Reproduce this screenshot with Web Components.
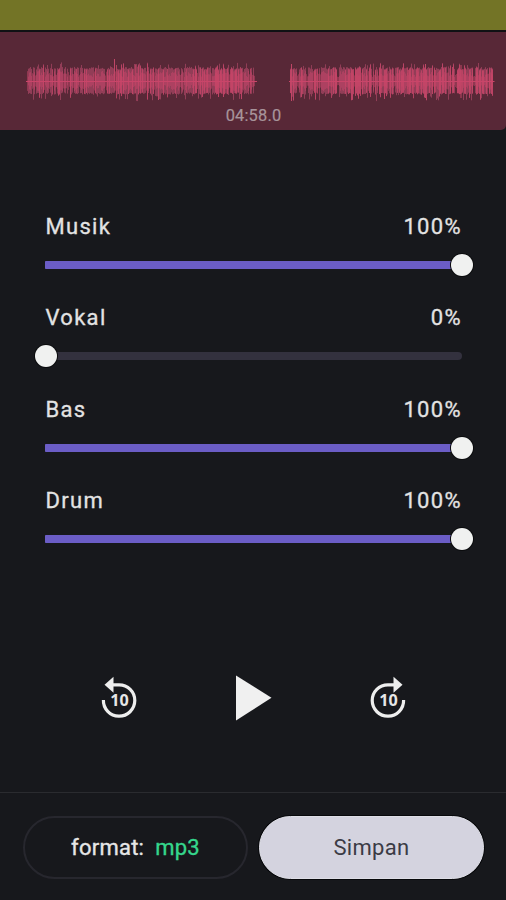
<!DOCTYPE html>
<html lang="id">
<head>
<meta charset="utf-8">
<title>Mixer</title>
<style>
html,body{margin:0;height:100%;background:#17181c}
body{font-family:Roboto,"Liberation Sans",sans-serif;color:#e3e3e3;overflow:hidden}
</style>
</head>
<body>
<mixer-app></mixer-app>
<script>
class BaseElement extends HTMLElement {
  render(html) {
    if (!this.shadowRoot) this.attachShadow({ mode: 'open' });
    this.shadowRoot.innerHTML = html;
  }
}

class WaveTrack extends BaseElement {
  connectedCallback() {
    let seed = 41;
    const rnd = () => (seed = (seed * 16807) % 2147483647) / 2147483647;
    let soft = '', strong = '', core = '';
    const segment = (from, to, density) => {
      for (let x = from; x < to; x += 1) {
        const d = density(x);
        const peak = rnd() < 0.25 ? 5 * rnd() : 0;
        const up = 12.5 + 2.5 * rnd() + peak;
        const down = 11.5 + 2 * rnd() + (rnd() < 0.28 ? 7.5 * rnd() : 0);
        const mid = 4 + 6 * rnd();
        if (rnd() < 0.83) soft += `M${x + .5} ${(50 - up).toFixed(1)}V${(49 + down).toFixed(1)}`;
        if (rnd() < d) strong += `M${x + .5} ${(51 - up).toFixed(1)}V${(49 + down).toFixed(1)}`;
        core += `M${x + .5} ${(49 - mid).toFixed(1)}V${(49 + mid).toFixed(1)}`;
      }
    };
    segment(27, 255, x => x < 115 ? .12 : x < 190 ? .32 : .48);
    segment(290, 493, x => x < 330 ? .25 : x < 440 ? .45 : .58);
    this.render(`
      <style>
        :host{display:flex;flex-direction:column;box-sizing:border-box;height:98px;background:#582837;border-radius:0 0 5px 0}
        svg{display:block;flex:none;width:506px;height:74px}
        .wave{filter:blur(.5px)}
        path{fill:none;stroke-width:1}
        time{font-size:16.4px;line-height:20px;letter-spacing:.2px;color:#a8949b;text-align:center;padding-left:1px;-webkit-text-stroke:.2px}
      </style>
      <svg viewBox="0 0 506 74" aria-hidden="true"><g class="wave">
        <path d="${soft}" stroke="#ae4867" opacity=".68"/>
        <path d="${core}" stroke="#c84569" opacity=".5"/>
        <path d="${strong}" stroke="#c84669" opacity=".8"/>
        <path d="M291.500 32V69M425.500 32V66M461 33V66M114.500 27V50" stroke="#c04667" stroke-width="1.500"/>
        <path d="M26 49.500H257M289 49.500H494.500" stroke="#c94569" stroke-width="2.500"/>
      </g></svg>
      <time><slot></slot></time>`);
  }
}

class VolumeSlider extends BaseElement {
  connectedCallback() {
    const value = Number(this.getAttribute('value'));
    this.render(`
      <style>
        :host{display:flex;flex-direction:column;height:91.4px;font-size:22px;letter-spacing:1.3px;-webkit-text-stroke:.3px}
        .head{display:flex;justify-content:space-between;line-height:26px;padding-left:.5px}
        .value{margin-right:-.3px}
        .rail{position:relative;height:8px;margin-top:21px;border-radius:0 4px 4px 0;background:#33313e}
        .fill{height:8px;width:${value}%;background:#6b5dc6;border-radius:1px}
        .thumb{position:absolute;left:${value}%;top:-7px;width:22px;height:22px;margin-left:-10.5px;border-radius:50%;background:#f0f1f0;box-shadow:0 0 0 1px #0b0c0e}
      </style>
      <div class="head"><span><slot></slot></span><span class="value">${value}%</span></div>
      <div class="rail"><div class="fill"></div><div class="thumb"></div></div>`);
  }
}

class SkipButton extends BaseElement {
  connectedCallback() {
    const forward = this.hasAttribute('forward');
    const arrow = forward ? ' transform="matrix(-1 0 0 1 40 0)"' : '';
    this.render(`
      <style>
        :host{display:block;width:40px;height:44px}
        svg{display:block}
        text{font:700 15.500px "Noto Sans",sans-serif;fill:#e6e6e6}
      </style>
      <svg width="40" height="44" viewBox="0 0 40 44">
        <g${arrow}>
          <path d="M4.400 24A15.700 15.700 0 1 0 20 8.800H12" fill="none" stroke="#eee" stroke-width="3.200"/>
          <path d="M5.500 8.800L14.500 .8V16.800Z" fill="#eee"/>
        </g>
        <text x="20.500" y="30" text-anchor="middle" textLength="18.500" lengthAdjust="spacingAndGlyphs">10</text>
      </svg>`);
  }
}

class PlayButton extends BaseElement {
  connectedCallback() {
    this.render(`
      <style>:host{display:block;width:36px;height:46px}svg{display:block}</style>
      <svg width="36" height="46" viewBox="0 0 36 46"><path d="M0 .5L35.500 22.800L0 45.500Z" fill="#f0f0f0"/></svg>`);
  }
}

class PillButton extends BaseElement {
  connectedCallback() {
    this.render(`
      <style>
        :host{display:flex;align-items:center;justify-content:center;box-sizing:border-box;height:63px;border-radius:32px;font-size:22px;line-height:26px;white-space:pre;letter-spacing:.25px;border:2px solid #27272e;color:#e6e6e6;-webkit-text-stroke:.35px}
        :host([primary]){background:#d4d3df;border:1px solid #dedee6;color:#3b3b45;box-shadow:0 0 0 1px #08090c;letter-spacing:.3px;-webkit-text-stroke:0}
      </style><slot></slot>`);
  }
}

class MixerApp extends BaseElement {
  connectedCallback() {
    this.render(`
      <style>
        :host{display:flex;flex-direction:column;width:506px;height:900px;background:#17181c}
        .banner{background:#737426;border-bottom:2px solid #101114;box-sizing:border-box;flex:none;height:32px}
        wave-track{flex:none}
        .sliders{display:flex;flex-direction:column;padding:84px 44.500px 0 45px;box-sizing:border-box;flex:1}
        .controls{display:grid;grid-template-columns:40px 36px 40px;justify-content:space-between;align-items:center;padding:0 98px 0 98.500px;height:48px;margin-bottom:70.500px}
        play-button{margin-left:1px}
        .footer{display:grid;grid-template-columns:225px 225px;gap:11px;border-top:1px solid #2a2b2f;padding:23px 22px 0 23px;height:108px;box-sizing:border-box}
        .mp3{color:#35d68c;margin-left:11px}
      </style>
      <div class="banner"></div>
      <wave-track>04:58.0</wave-track>
      <div class="sliders">
        <volume-slider value="100">Musik</volume-slider>
        <volume-slider value="0">Vokal</volume-slider>
        <volume-slider value="100">Bas</volume-slider>
        <volume-slider value="100">Drum</volume-slider>
      </div>
      <div class="controls"><skip-button></skip-button><play-button></play-button><skip-button forward></skip-button></div>
      <div class="footer">
        <pill-button><span>format:</span><span class="mp3">mp3</span></pill-button>
        <pill-button primary>Simpan</pill-button>
      </div>`);
  }
}

customElements.define('wave-track', WaveTrack);
customElements.define('volume-slider', VolumeSlider);
customElements.define('skip-button', SkipButton);
customElements.define('play-button', PlayButton);
customElements.define('pill-button', PillButton);
customElements.define('mixer-app', MixerApp);
</script>
</body>
</html>
